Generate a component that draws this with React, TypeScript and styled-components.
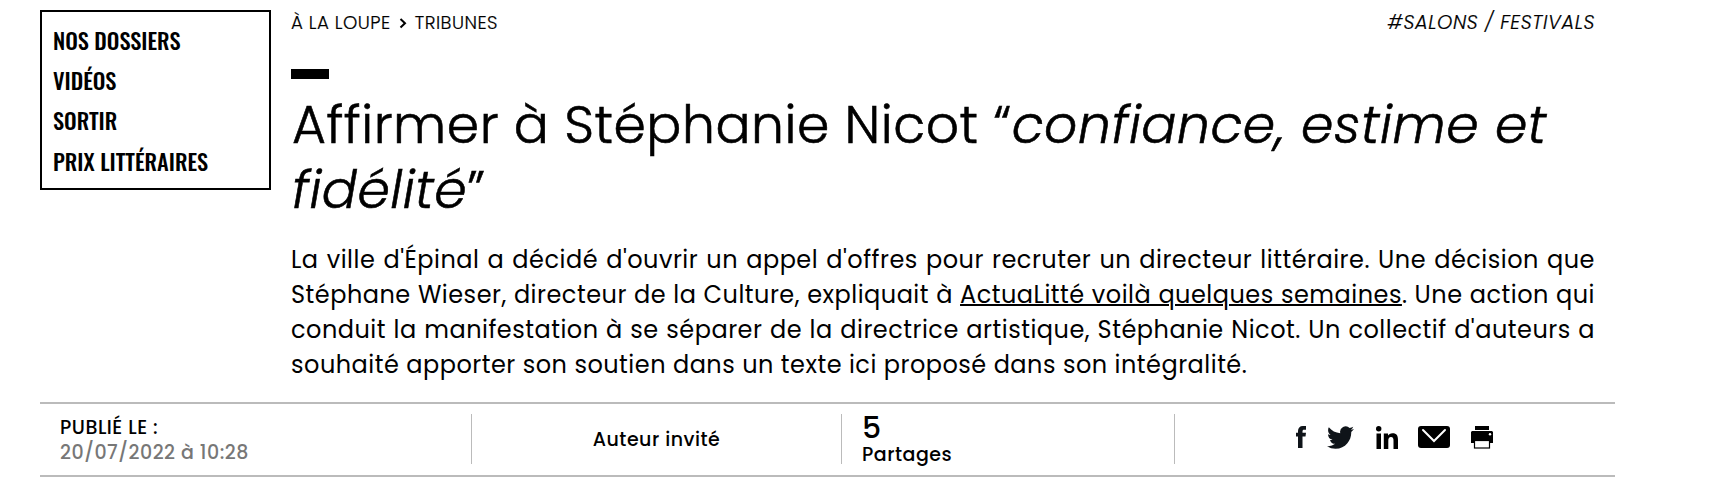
import React from "react";
import styled, { createGlobalStyle } from "styled-components";

const GlobalStyle = createGlobalStyle`
  * { box-sizing: border-box; }
  body { margin: 0; background: #fff; color: #000; font-family: Poppins, Inter, sans-serif; letter-spacing: 0.5px; }
  a { color: inherit; text-decoration: none; }
`;

const Page = styled.main`
  width: 1575px;
  margin-left: 40px;
  padding-top: 10px;
`;

const Columns = styled.div`
  display: flex;
  align-items: flex-start;
  gap: 20px;
  height: 392px;
`;

const SideMenu = styled.nav`
  width: 231px;
  height: 180px;
  flex: none;
  padding: 8px 11px 0;
  border: 2px solid #000;
`;

const MenuLink = styled.a`
  display: block;
  font: 500 22.4px/40.2px Oswald, "Open Sans", sans-serif;
  letter-spacing: 0;
  text-transform: uppercase;
`;

const Article = styled.article`
  width: 1304px;
`;

const TopLine = styled.div`
  display: flex;
  justify-content: space-between;
  padding-top: 1px;
  height: 59px;
  font-size: 18.2px;
  font-weight: 300;
  line-height: 24px;
  -webkit-text-stroke: 0.2px #000;
`;

const Crumbs = styled.div`
  display: flex;
  align-items: center;
  gap: 8px;
  height: 24px;
`;

const Chevron = styled.svg`
  width: 8px;
  height: 12px;
  fill: none;
  stroke: #000;
  stroke-width: 2;
`;

const Tag = styled.a`
  font-size: 19.4px;
  font-style: italic;
  letter-spacing: 0.6px;
`;

const Accent = styled.div`
  width: 38px;
  height: 10px;
  background: #000;
`;

const Title = styled.h1`
  margin: 13px 0 20px;
  padding-left: 1px;
  font-size: 52px;
  font-weight: 300;
  line-height: 65px;
  letter-spacing: 0.53px;
  -webkit-text-stroke: 0.6px #000;
`;

const Lead = styled.p`
  margin: 0;
  font-size: 24px;
  line-height: 35px;
  text-align: justify;

  a { text-decoration: underline; text-decoration-thickness: 2px; }
`;

const MetaBar = styled.footer`
  display: flex;
  align-items: flex-start;
  height: 75px;
  padding-top: 10px;
  border: solid #bbb;
  border-width: 2px 0;
  font-size: 19px;
  font-weight: 500;
  line-height: 25px;
`;

const MetaCell = styled.div<{ $width: number; $center?: boolean }>`
  display: flex;
  flex-direction: column;
  justify-content: center;
  width: ${(p) => p.$width}px;
  height: 50px;
  padding: ${(p) => (p.$center ? "0" : "2px 20px 0")};
  align-items: ${(p) => (p.$center ? "center" : "flex-start")};

  & + & { border-left: 1px solid #bbb; }
`;

const PublishedDate = styled.span`
  color: #777;
`;

const ShareCount = styled.strong`
  font-size: 30px;
  font-weight: 500;
  line-height: 28px;
`;

const ShareLinks = styled.div`
  display: flex;
  align-items: center;
  height: 24px;
  margin: 0 2px 4px 0;
`;

const ShareIcon = styled.svg<{ $gap?: number }>`
  flex: none;
  margin-left: ${(p) => p.$gap ?? 0}px;
`;

export default function App() {
  return (
    <Page>
      <GlobalStyle />
      <Columns>
        <SideMenu>
          <MenuLink>Nos dossiers</MenuLink>
          <MenuLink>Vidéos</MenuLink>
          <MenuLink>Sortir</MenuLink>
          <MenuLink>Prix littéraires</MenuLink>
        </SideMenu>
        <Article>
          <TopLine>
            <Crumbs>
              <a>À LA LOUPE</a>
              <Chevron viewBox="0 0 8 12"><path d="M1.5 2 6 6.2 1.5 10.5" /></Chevron>
              <a>TRIBUNES</a>
            </Crumbs>
            <Tag>#SALONS / FESTIVALS</Tag>
          </TopLine>
          <Accent />
          <Title>Affirmer à Stéphanie Nicot “<em>confiance, estime et fidélité</em>”</Title>
          <Lead>
            La ville d'Épinal a décidé d'ouvrir un appel d'offres pour recruter un directeur littéraire. Une décision
            que Stéphane Wieser, directeur de la Culture, expliquait à <a>ActuaLitté voilà quelques semaines</a>. Une
            action qui conduit la manifestation à se séparer de la directrice artistique, Stéphanie Nicot. Un collectif
            d'auteurs a souhaité apporter son soutien dans un texte ici proposé dans son intégralité.
          </Lead>
        </Article>
      </Columns>
      <MetaBar>
        <MetaCell $width={431}>
          <span>PUBLIÉ LE :</span>
          <PublishedDate>20/07/2022 à 10:28</PublishedDate>
        </MetaCell>
        <MetaCell $width={370} $center>Auteur invité</MetaCell>
        <MetaCell $width={333}>
          <ShareCount>5</ShareCount>
          <span>Partages</span>
        </MetaCell>
        <MetaCell $width={441} $center>
          <ShareLinks>
            <ShareIcon width="10" height="22" viewBox="0 0 10 22" fill="#0f1419">
              <path d="M2 22V10.5H0V6.8H2V5C2 2 3.8 0 6.8 0H10V3.8H8C6.9 3.8 6.5 4.4 6.5 5.5V6.8H10L9.5 10.5H6.5V22Z" />
            </ShareIcon>
            <ShareIcon $gap={21} width="27" height="23" viewBox="0 2 24 20" preserveAspectRatio="none" fill="#0f1419">
              <path d="M23.95 4.57a10 10 0 0 1-2.82.77 4.96 4.96 0 0 0 2.16-2.72c-.95.55-2 .95-3.13 1.18a4.92 4.92 0 0 0-8.38 4.48C7.69 8.1 4.07 6.13 1.64 3.16a4.82 4.82 0 0 0-.67 2.48c0 1.71.87 3.21 2.19 4.1a4.9 4.9 0 0 1-2.23-.62v.06a4.92 4.92 0 0 0 3.95 4.83 5 5 0 0 1-2.21.08 4.94 4.94 0 0 0 4.6 3.42A9.87 9.87 0 0 1 0 19.54a14 14 0 0 0 7.55 2.21c9.05 0 14-7.5 14-13.98 0-.21 0-.42-.02-.63a9.94 9.94 0 0 0 2.42-2.57Z" />
            </ShareIcon>
            <ShareIcon $gap={22} width="22" height="23" viewBox="0 0 22 23">
              <circle cx="2.7" cy="2.8" r="2.7" />
              <path d="M.5 7.5H5V23H.5ZM7.8 7.5H12V9.6C12.8 8.2 14.3 7.2 16.5 7.2 20.8 7.2 22 9.8 22 14V23H17.5V15C17.5 12.8 17.2 11.1 15 11.1S12.3 12.8 12.3 15V23H7.8Z" />
            </ShareIcon>
            <ShareIcon $gap={20} width="32" height="22" viewBox="0 0 32 22">
              <rect width="32" height="22" rx="3" />
              <path d="M5 4 16 15 27 4" fill="none" stroke="#fff" strokeWidth="2" strokeLinecap="round" />
            </ShareIcon>
            <ShareIcon $gap={21} width="22" height="23" viewBox="0 0 22 23">
              <path d="M4 0H18V4H4ZM1 5H21L22 6V17H19V14H3V17H0V6Z" />
              <rect x="3.5" y="14.5" width="15" height="7.5" fill="#fff" stroke="#000" strokeWidth="1.2" />
              <circle cx="19" cy="8.2" r="1.2" fill="#fff" />
            </ShareIcon>
          </ShareLinks>
        </MetaCell>
      </MetaBar>
    </Page>
  );
}
